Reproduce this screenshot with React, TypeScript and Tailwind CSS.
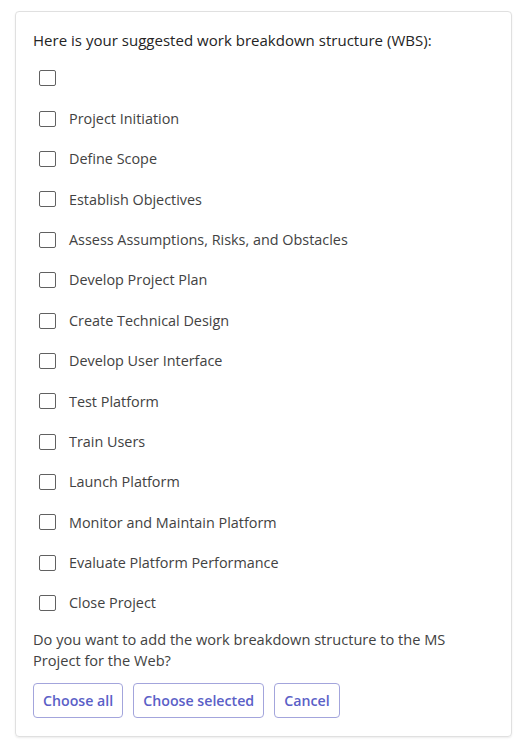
import React from "react";

const items = [
  "",
  "Project Initiation",
  "Define Scope",
  "Establish Objectives",
  "Assess Assumptions, Risks, and Obstacles",
  "Develop Project Plan",
  "Create Technical Design",
  "Develop User Interface",
  "Test Platform",
  "Train Users",
  "Launch Platform",
  "Monitor and Maintain Platform",
  "Evaluate Platform Performance",
  "Close Project",
];

export default function App() {
  return (
    <div className="w-[523px] h-[750px] bg-white pt-[11px] pl-[15px]" style={{ fontFamily: '"Open Sans", sans-serif' }}>
      <div className="w-[497px] h-[726px] rounded-[4px] border border-[#e0e0e0] shadow-[0_1px_2px_rgba(0,0,0,0.08)] pl-[17px] pr-4 pt-[18px]">
        <div className="text-[15px] leading-[20px] text-[#242424] tracking-[0.02px]">
          Here is your suggested work breakdown structure (WBS):
        </div>
        <div className="flex flex-col mt-[8px]">
          {items.map((t, i) => (
            <label key={i} className="flex items-center h-[40.4px] pl-[6px]">
              <span className="w-[17px] h-[16px] rounded-[2px] border border-[#616161] shrink-0" />
              <span className="ml-[13px] text-[14.4px] text-[#424242]">{t}</span>
            </label>
          ))}
        </div>
        <div className="mt-[6px] text-[14.6px] leading-[21px] text-[#424242] pr-10">
          Do you want to add the work breakdown structure to the MS Project for the Web?
        </div>
        <div className="flex gap-[10px] mt-[12px]">
          {["Choose all", "Choose selected", "Cancel"].map((b) => (
            <button key={b} className="h-[35px] px-[9px] rounded-[4px] border border-[#a3a5dc] text-[#5b5fc7] text-[14.2px] font-semibold bg-white">
              {b}
            </button>
          ))}
        </div>
      </div>
    </div>
  );
}
